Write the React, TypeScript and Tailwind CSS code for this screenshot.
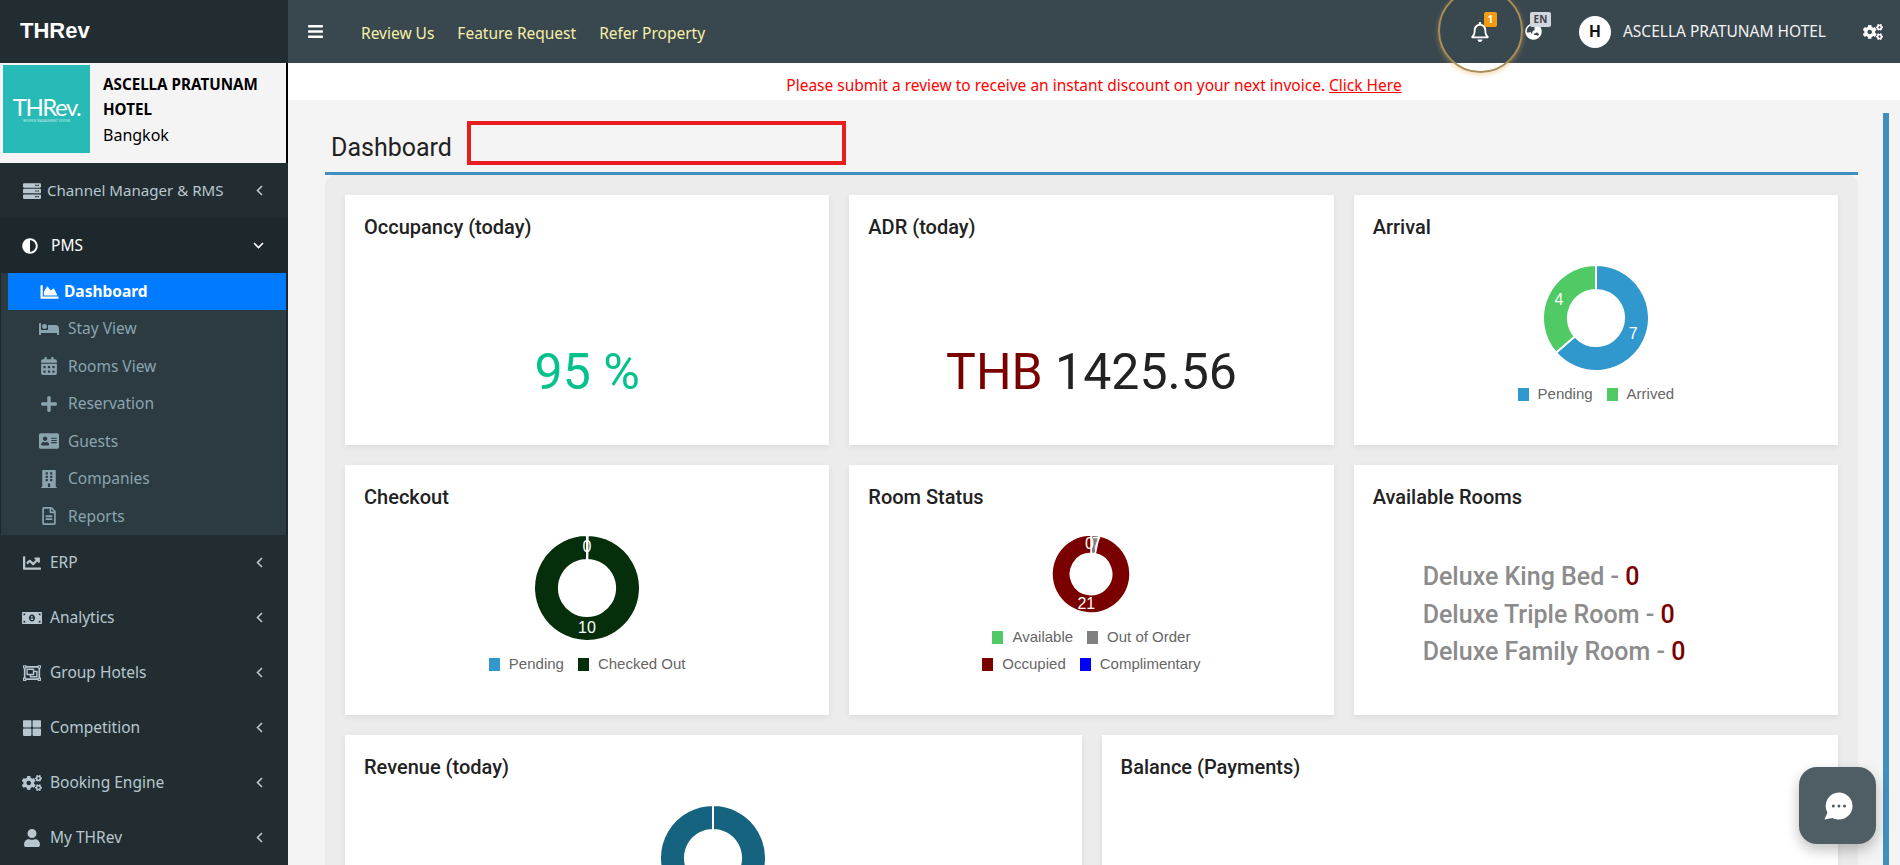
import { useMemo } from "react";
import {
  FaServer,
  FaAdjust,
  FaChartArea,
  FaBed,
  FaCalendarAlt,
  FaPlus,
  FaAddressCard,
  FaBuilding,
  FaRegFileAlt,
  FaChartLine,
  FaMoneyBillAlt,
  FaRegObjectGroup,
  FaThLarge,
  FaCogs,
  FaUser,
  FaBars,
  FaRegBell,
  FaGlobeAsia,
} from "react-icons/fa";

const subItems = [
  { label: "Stay View", icon: FaBed },
  { label: "Rooms View", icon: FaCalendarAlt },
  { label: "Reservation", icon: FaPlus },
  { label: "Guests", icon: FaAddressCard },
  { label: "Companies", icon: FaBuilding },
  { label: "Reports", icon: FaRegFileAlt },
];

const lowerItems = [
  { label: "ERP", icon: FaChartLine },
  { label: "Analytics", icon: FaMoneyBillAlt },
  { label: "Group Hotels", icon: FaRegObjectGroup },
  { label: "Competition", icon: FaThLarge },
  { label: "Booking Engine", icon: FaCogs },
  { label: "My THRev", icon: FaUser },
];

type Slice = { value: number; color: string; label?: string; lx?: number; ly?: number };

function Donut({ size, slices }: { size: number; slices: Slice[] }) {
  const arcs = useMemo(() => {
    const total = slices.reduce((s, x) => s + x.value, 0);
    const R = 50;
    const r = 26.5;
    let a = -Math.PI / 2;
    return slices.map((s) => {
      const sweep = (s.value / total) * Math.PI * 2 - 0.0001;
      const b = a + sweep;
      const large = sweep > Math.PI ? 1 : 0;
      const p = (ang: number, rad: number) => `${50 + rad * Math.cos(ang)} ${50 + rad * Math.sin(ang)}`;
      const d = `M${p(a, R)}A${R} ${R} 0 ${large} 1 ${p(b, R)}L${p(b, r)}A${r} ${r} 0 ${large} 0 ${p(a, r)}Z`;
      a = b;
      return { d, color: s.color };
    });
  }, [slices]);

  return (
    <svg width={size} height={size} viewBox="0 0 100 100" className="block">
      {arcs.map((arc, i) => (
        <path key={i} d={arc.d} fill={arc.color} stroke="#fff" strokeWidth={(2 * 100) / 106} />
      ))}
      {slices.map((s, i) =>
        s.label ? (
          <text
            key={i}
            x={s.lx}
            y={s.ly}
            fill="#fff"
            fontSize={(16 * 100) / size}
            textAnchor="middle"
            dominantBaseline="central"
            fontFamily="'Liberation Sans', sans-serif"
          >
            {s.label}
          </text>
        ) : null
      )}
    </svg>
  );
}

function Legend({ items }: { items: { label: string; color: string }[] }) {
  return (
    <div className="flex justify-center gap-[14px] text-[15px] leading-[16px] text-[#666] font-['Liberation_Sans',sans-serif]">
      {items.map((item) => (
        <span key={item.label} className="flex items-center gap-[9px]">
          <span className="w-[11px] h-[13px] inline-block" style={{ background: item.color }} />
          {item.label}
        </span>
      ))}
    </div>
  );
}

function Card({ title, children }: { title: string; children?: React.ReactNode }) {
  return (
    <div className="bg-white h-[250px] px-[19px] pt-[19px] shadow-[0_2px_6px_rgba(0,0,0,0.07)]">
      <h3 className="text-[20px] leading-[26px] font-medium text-[#222] font-['Roboto',sans-serif]">{title}</h3>
      {children}
    </div>
  );
}

function TopMenu({ label, icon: Icon, tight }: { label: string; icon: typeof FaServer; tight?: boolean }) {
  return (
    <div className="h-[55px] flex items-center pl-[22px] pr-[25px] text-[#b8c7ce]">
      <Icon className="w-[20px] h-[18px] shrink-0" />
      <span className={tight ? "ml-[5px] flex-1 text-[15.1px]" : "ml-[8px] flex-1 text-[15.5px]"}>{label}</span>
      <svg width="7" height="11" viewBox="0 0 7 11" fill="none" stroke="currentColor" strokeWidth="1.6">
        <path d="M6 1 1.500 5.500 6 10" />
      </svg>
    </div>
  );
}

export default function App() {
  return (
    <div className="h-[865px] w-[1900px] overflow-hidden flex bg-[#f4f4f4] font-['Noto_Sans',sans-serif] relative">
      {/* Sidebar */}
      <aside className="w-[288px] shrink-0 bg-[#222d32] flex flex-col">
        <div className="h-[63px] flex items-center pl-[20px] pb-[2px] text-[22px] font-bold text-white font-['Liberation_Sans',sans-serif]">
          THRev
        </div>
        <div className="h-[100px] w-[288px] bg-[#f4f4f4] border-r-[2px] border-black flex items-start pl-[3px] pt-[2px]">
          <div className="w-[87px] h-[88px] shrink-0 bg-[#27bab6] flex flex-col items-center justify-center text-white">
            <span className="text-[24px] leading-[22px] tracking-[-1.5px] font-['Lato',sans-serif]">THRev.</span>
            <span className="text-[3px] leading-[4px] mt-[1px] opacity-70">REVENUE MANAGEMENT SYSTEM</span>
          </div>
          <div className="ml-[13px] pt-[7px] text-black text-[15.2px] leading-[25px]">
            <div className="font-bold">ASCELLA PRATUNAM HOTEL</div>
            <div className="text-[16px] leading-[27px]">Bangkok</div>
          </div>
        </div>
        <TopMenu label="Channel Manager & RMS" icon={FaServer} tight />
        <div className="bg-[#1e282c]">
          <div className="h-[55px] flex items-center pl-[22px] pr-[24px] text-white">
            <FaAdjust className="w-[16px] h-[16px] shrink-0" />
            <span className="ml-[13px] flex-1 text-[15.5px]">PMS</span>
            <svg width="11" height="7" viewBox="0 0 11 7" fill="none" stroke="currentColor" strokeWidth="1.6">
              <path d="M1 1 5.500 5.500 10 1" />
            </svg>
          </div>
          <div className="ml-[1px] w-[285px] bg-[#2c3b41]">
            <div className="ml-[7px] h-[37px] bg-[#007bff] flex items-center pl-[31px] text-white font-bold">
              <FaChartArea className="w-[21px] h-[18px] shrink-0" />
              <span className="ml-[4px] text-[15.5px]">Dashboard</span>
            </div>
            <div>
              {subItems.map(({ label, icon: Icon }) => (
                <div key={label} className="h-[37.5px] flex items-center pl-[38px] text-[#8aa4af]">
                  <span className="w-[29px] shrink-0">
                    <Icon className="w-[20px] h-[18px]" />
                  </span>
                  <span className="text-[15.5px]">{label}</span>
                </div>
              ))}
            </div>
          </div>
        </div>
        {lowerItems.map((item) => (
          <TopMenu key={item.label} label={item.label} icon={item.icon} />
        ))}
      </aside>

      {/* Main */}
      <div className="flex-1 min-w-0 flex flex-col">
        <header className="h-[63px] bg-[#39484f] flex items-center text-white shrink-0">
          <FaBars className="ml-[19px] w-[17px] h-[17px]" />
          <nav className="ml-[37px] pt-[5px] flex gap-[23px] text-[15.5px] text-[#f7efa8]">
            <span>Review Us</span>
            <span>Feature Request</span>
            <span>Refer Property</span>
          </nav>
          <div className="ml-auto flex items-center">
            <div className="relative w-[18px] h-[20px] mr-[36px]">
              <div className="absolute z-10 left-[-33px] top-[-34px] w-[85px] h-[85px] rounded-full border-[2px] border-[#a98d5a] shadow-[0_2px_5px_rgba(240,173,78,0.45)]" />
              <FaRegBell className="absolute inset-0 w-[18px] h-[20px]" />
              <span className="absolute left-[13px] top-[-10px] w-[13px] h-[15px] rounded-[2px] bg-[#f39c12] text-[10px] leading-[15px] font-bold text-center">
                1
              </span>
            </div>
            <div className="relative w-[17px] h-[17px] mr-[37px]">
              <FaGlobeAsia className="w-[17px] h-[17px]" />
              <span className="absolute left-[5px] top-[-11px] w-[21px] h-[15px] rounded-[2px] bg-[#d2d6de] text-[#444] text-[10px] leading-[15px] font-bold text-center">
                EN
              </span>
            </div>
            <div className="w-[32px] h-[32px] rounded-full bg-white text-[#111] text-[16px] font-bold flex items-center justify-center font-['Roboto',sans-serif]">
              H
            </div>
            <span className="ml-[12px] text-[15.5px] text-[#f2f2f2]">ASCELLA PRATUNAM HOTEL</span>
            <FaCogs className="ml-[37px] mr-[17px] w-[20px] h-[18px]" />
          </div>
        </header>

        <div className="h-[37px] bg-white shrink-0 flex items-center justify-center pt-[9px] text-[15.5px] text-[#f00]">
          <span>
            Please submit a review to receive an instant discount on your next invoice. <u>Click Here</u>
          </span>
        </div>

        <div className="flex-1 min-h-0 flex">
          <main className="ml-[37px] w-[1533px] min-w-0">
            <div className="h-[75px] flex items-end border-b-[3px] border-[#3f8fc0]">
              <h1 className="ml-[6px] mb-[7px] text-[25px] leading-[34px] text-[#222] font-['Roboto',sans-serif]">Dashboard</h1>
              <div className="ml-[15px] mb-[7px] w-[379px] h-[44px] border-[4px] border-[#e81e1e]" />
            </div>
            <div className="bg-[#ececec] rounded-t-[10px] h-[700px] px-[20px] pt-[20px] flex flex-col gap-[20px]">
              <div className="grid grid-cols-3 gap-[20px]">
                <Card title="Occupancy (today)">
                  <div className="mt-[99px] text-center text-[50px] leading-[66px] text-[#05c18c] font-['Roboto',sans-serif]">95 %</div>
                </Card>
                <Card title="ADR (today)">
                  <div className="mt-[99px] text-center text-[50px] leading-[66px] text-[#222] font-['Roboto',sans-serif]">
                    <span className="text-[#7a0000]">THB</span> 1425.56
                  </div>
                </Card>
                <Card title="Arrival">
                  <div className="mt-[25px] flex flex-col items-center">
                    <Donut
                      size={106}
                      slices={[
                        { value: 7, color: "#3198ce", label: "7", lx: 85, ly: 65 },
                        { value: 4, color: "#4fca64", label: "4", lx: 15, ly: 33 },
                      ]}
                    />
                    <div className="mt-[15px]">
                      <Legend items={[{ label: "Pending", color: "#3198ce" }, { label: "Arrived", color: "#4fca64" }]} />
                    </div>
                  </div>
                </Card>
              </div>
              <div className="grid grid-cols-3 gap-[20px]">
                <Card title="Checkout">
                  <div className="mt-[25px] flex flex-col items-center">
                    <Donut
                      size={106}
                      slices={[
                        { value: 0.02, color: "#3198ce", label: "0", lx: 50, ly: 11 },
                        { value: 10, color: "#042f0a", label: "10", lx: 50, ly: 87 },
                      ]}
                    />
                    <div className="mt-[15px]">
                      <Legend items={[{ label: "Pending", color: "#3198ce" }, { label: "Checked Out", color: "#042f0a" }]} />
                    </div>
                  </div>
                </Card>
                <Card title="Room Status">
                  <div className="mt-[25px] flex flex-col items-center">
                    <Donut
                      size={78}
                      slices={[
                        { value: 0.02, color: "#4fca64", label: "0", lx: 48, ly: 11 },
                        { value: 0.7, color: "#808080", label: "7", lx: 57, ly: 11 },
                        { value: 21, color: "#7a0000", label: "21", lx: 44, ly: 88 },
                      ]}
                    />
                    <div className="mt-[16px] flex flex-col gap-[11px]">
                      <Legend items={[{ label: "Available", color: "#4fca64" }, { label: "Out of Order", color: "#808080" }]} />
                      <Legend items={[{ label: "Occupied", color: "#7a0000" }, { label: "Complimentary", color: "#0000ff" }]} />
                    </div>
                  </div>
                </Card>
                <Card title="Available Rooms">
                  <div className="mt-[48px] pl-[50px] text-[25px] leading-[37.5px] font-medium text-[#8c8c8c] font-['Roboto',sans-serif]">
                    <div>Deluxe King Bed - <span className="text-[#7a0000]">0</span></div>
                    <div>Deluxe Triple Room - <span className="text-[#7a0000]">0</span></div>
                    <div>Deluxe Family Room - <span className="text-[#7a0000]">0</span></div>
                  </div>
                </Card>
              </div>
              <div className="grid grid-cols-2 gap-[20px]">
                <Card title="Revenue (today)">
                  <div className="mt-[25px] flex justify-center">
                    <Donut size={106} slices={[{ value: 1, color: "#15637e" }]} />
                  </div>
                </Card>
                <Card title="Balance (Payments)" />
              </div>
            </div>
          </main>
          <div className="ml-[25px] mt-[13px] w-[6px] bg-[#3f8fc0]" />
        </div>
      </div>

      {/* Chat launcher */}
      <div className="absolute left-[1799px] top-[767px] w-[77px] h-[77px] rounded-[18px] bg-[#4f5d65] shadow-[0_6px_14px_rgba(0,0,0,0.25)] flex items-center justify-center">
        <svg width="30" height="30" viewBox="0 0 32 32">
          <path d="M17 1.500a14.500 14.500 0 0 1 0 29c-2.600 0-4.800-.6-6.800-1.600L1.500 30.500l3.200-7.300A14.500 14.500 0 0 1 17 1.500Z" fill="#fff" />
          <circle cx="11" cy="16" r="1.600" fill="#4f5d65" />
          <circle cx="17" cy="16" r="1.600" fill="#4f5d65" />
          <circle cx="23" cy="16" r="1.600" fill="#4f5d65" />
        </svg>
      </div>
    </div>
  );
}
